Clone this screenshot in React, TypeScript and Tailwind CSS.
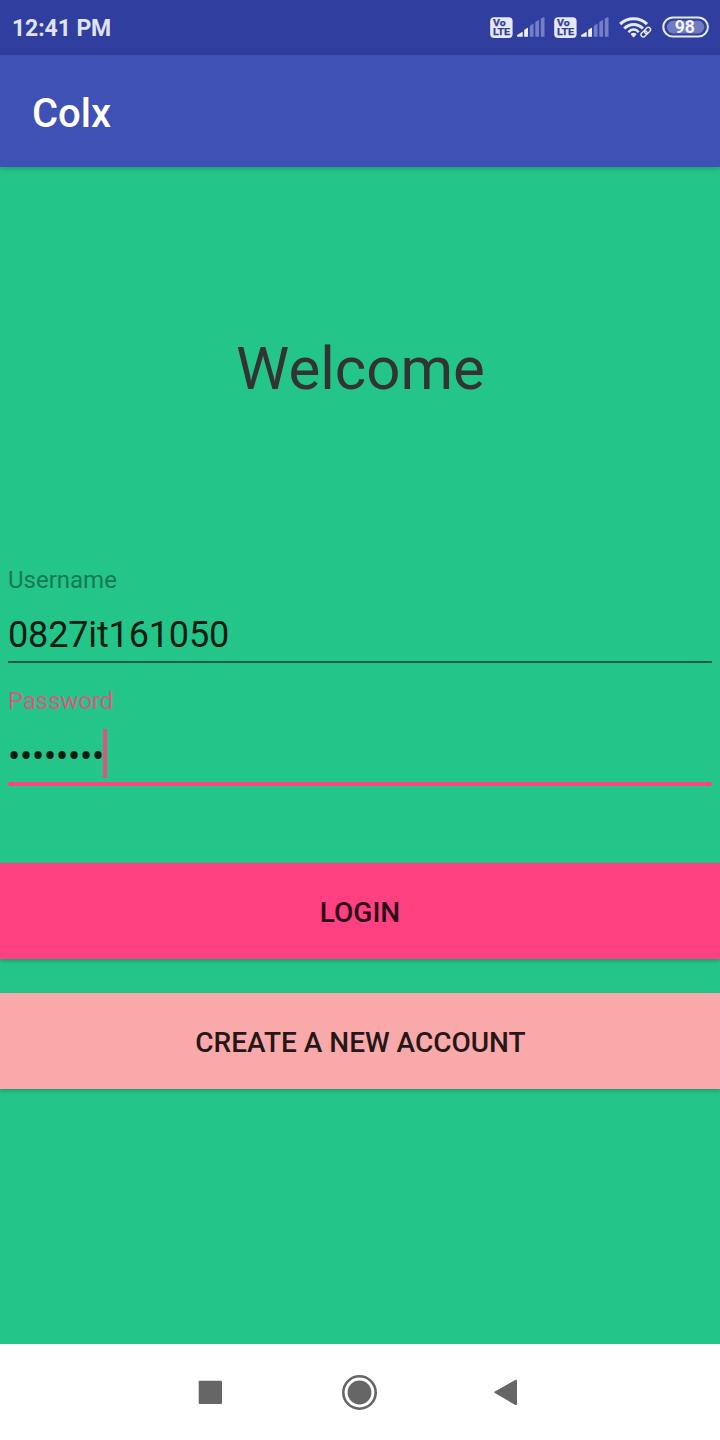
function VolteIcon() {
  return (
    <svg className="h-[22px] w-[23px]" viewBox="0 0 23 22">
      <rect x="0.2" y="0.2" width="22.4" height="20.8" rx="4" fill="#e6e8f6" />
      <g fill="#303f9f" stroke="#303f9f" strokeWidth="0.25" fontFamily="Roboto, sans-serif" fontWeight="700">
        <text x="3" y="9.3" fontSize="9" textLength="12.6" lengthAdjust="spacingAndGlyphs">Vo</text>
        <text x="2.9" y="18" fontSize="9.2" textLength="17.2" lengthAdjust="spacingAndGlyphs">LTE</text>
      </g>
    </svg>
  );
}

function SignalIcon() {
  return (
    <svg className="h-[22px] w-[28px]" viewBox="0 0 28 22">
      <g fill="#eceefa">
        <path d="M0 18.2 4.6 15.2Q5.7 14.6 5.7 15.6V19.7H0.4Q-0.3 19 0 18.2Z" />
        <path d="M7.2 12.9 10 10.9Q11 10.5 11 11.4V19.7H7.2Z" />
      </g>
      <g fill="#7480c5">
        <path d="M12.8 8.9 15.5 6.9Q16.5 6.4 16.5 7.4V19.7H12.8Z" />
        <path d="M18.3 5.2 21 3.3Q22 2.9 22 3.8V19.7H18.3Z" />
        <path d="M23.8 1.8 26.5 0.2Q27.5 -0.2 27.5 0.8V19.7H23.8Z" />
      </g>
    </svg>
  );
}

function WifiIcon() {
  return (
    <svg className="h-[24px] w-[34px]" viewBox="0 0 34 24" fill="none" stroke="#e8eaf8">
      <path d="M1.2 7.1C8.4 -0.1 20.8 -0.1 28 7.1" strokeWidth="3.1" />
      <path d="M5.3 11.5C10.5 6 18.7 6 23.9 11.5" strokeWidth="3" />
      <path d="M9.5 15.3C12.3 11.4 16.9 11.4 19.7 15.3" strokeWidth="2.5" />
      <path d="M12.6 17.2Q14.6 16 16.6 17.2L14.6 19.5Z" fill="#e8eaf8" strokeWidth="1.6" strokeLinejoin="round" />
      <g transform="rotate(-45 26.8 15.2)" strokeWidth="1.4">
        <rect x="21" y="12.9" width="6.8" height="4.5" rx="2.2" />
        <rect x="25.8" y="12.9" width="6.8" height="4.5" rx="2.2" />
      </g>
    </svg>
  );
}

function BatteryIcon() {
  return (
    <svg className="h-[22px] w-[47px]" viewBox="0 0 47 22">
      <rect x="1.3" y="1.4" width="44.6" height="19.2" rx="9.6" fill="none" stroke="#e6e8f6" strokeWidth="2" />
      <rect x="4.9" y="4.8" width="37.4" height="12.6" rx="6.3" fill="#6f7bc2" />
      <text x="22.8" y="17.3" fontSize="17.6" fontWeight="700" textAnchor="middle" fill="#f4f5fc" fontFamily="Roboto, sans-serif">98</text>
    </svg>
  );
}

export default function App() {
  return (
    <div className="flex h-[1440px] w-[720px] flex-col overflow-hidden bg-[#24c588] font-['Roboto',sans-serif]">
      <div className="flex h-[55px] shrink-0 items-start justify-between bg-[#303f9f] pr-[11px] pl-3">
        <span className="pt-[14px] text-[23px] leading-[30px] font-bold tracking-[-0.1px] text-[#e0e3f5]">12:41 PM</span>
        <div className="flex items-start pt-[17px]">
          <VolteIcon />
          <div className="ml-1"><SignalIcon /></div>
          <div className="ml-[9px]"><VolteIcon /></div>
          <div className="ml-1"><SignalIcon /></div>
          <div className="ml-[10px]"><WifiIcon /></div>
          <div className="-mt-px ml-[9px]"><BatteryIcon /></div>
        </div>
      </div>
      <header className="z-10 flex h-28 shrink-0 items-center bg-[#3f51b5] px-8 pt-[5px] shadow-[0_2px_5px_rgba(0,0,0,0.18)]">
        <h1 className="text-[40px] leading-[48px] font-medium text-white">Colx</h1>
      </header>
      <main className="flex flex-1 flex-col">
        <h2 className="mt-[162px] pl-px text-center text-[60px] leading-[80px] text-[#333333]">Welcome</h2>
        <div className="mt-[157px] flex flex-col px-2">
          <label className="text-[24px] leading-[28px] text-[#157a53]">Username</label>
          <div className="mt-[17px] h-[52px] border-b-2 border-[#145c41] text-[36px] leading-[48px] tracking-[-0.15px] text-[#041c12]">0827it161050</div>
          <label className="mt-6 text-[24px] leading-[28px] tracking-[-0.1px] text-[#d55b82]">Password</label>
          <div className="mt-[14px] flex h-[57px] items-start border-b-4 border-[#fb4581]">
            <span className="w-[95px] pt-1 text-[36px] leading-[48px] tracking-[-0.13px] whitespace-nowrap text-[#041c12]">••••••••</span>
            <span className="h-[49px] w-1 bg-[#e0527f]" />
          </div>
        </div>
        <button className="mt-[77px] h-24 w-full bg-[#ff4081] pt-[3px] text-[28px] font-medium text-[#2b0b16] shadow-[0_2px_4px_rgba(0,0,0,0.22)]">LOGIN</button>
        <button className="mt-[34px] h-24 w-full bg-[#faa9aa] pt-[3px] pl-px text-[28px] font-medium text-[#261717] shadow-[0_2px_4px_rgba(0,0,0,0.22)]">CREATE A NEW ACCOUNT</button>
      </main>
      <nav className="flex h-24 shrink-0 items-center bg-white pl-[198px] text-[#666666]">
        <svg className="size-6" viewBox="0 0 24 24" fill="currentColor">
          <rect x="0.7" y="0.7" width="23.3" height="23.3" rx="1" />
        </svg>
        <svg className="ml-[119px] size-9" viewBox="0 0 36 36">
          <circle cx="18.5" cy="18.5" r="16.2" fill="none" stroke="currentColor" strokeWidth="2.6" />
          <circle cx="18.5" cy="18.5" r="11.9" fill="currentColor" />
        </svg>
        <svg className="ml-[117px] h-[28px] w-6" viewBox="0 0 24 28" fill="currentColor">
          <path d="M0.8 13.5Q-0.2 14.2 0.8 15.1L21.3 26.9Q23 27.6 23 26V3Q23 1.1 21.3 1.9Z" />
        </svg>
      </nav>
    </div>
  );
}
